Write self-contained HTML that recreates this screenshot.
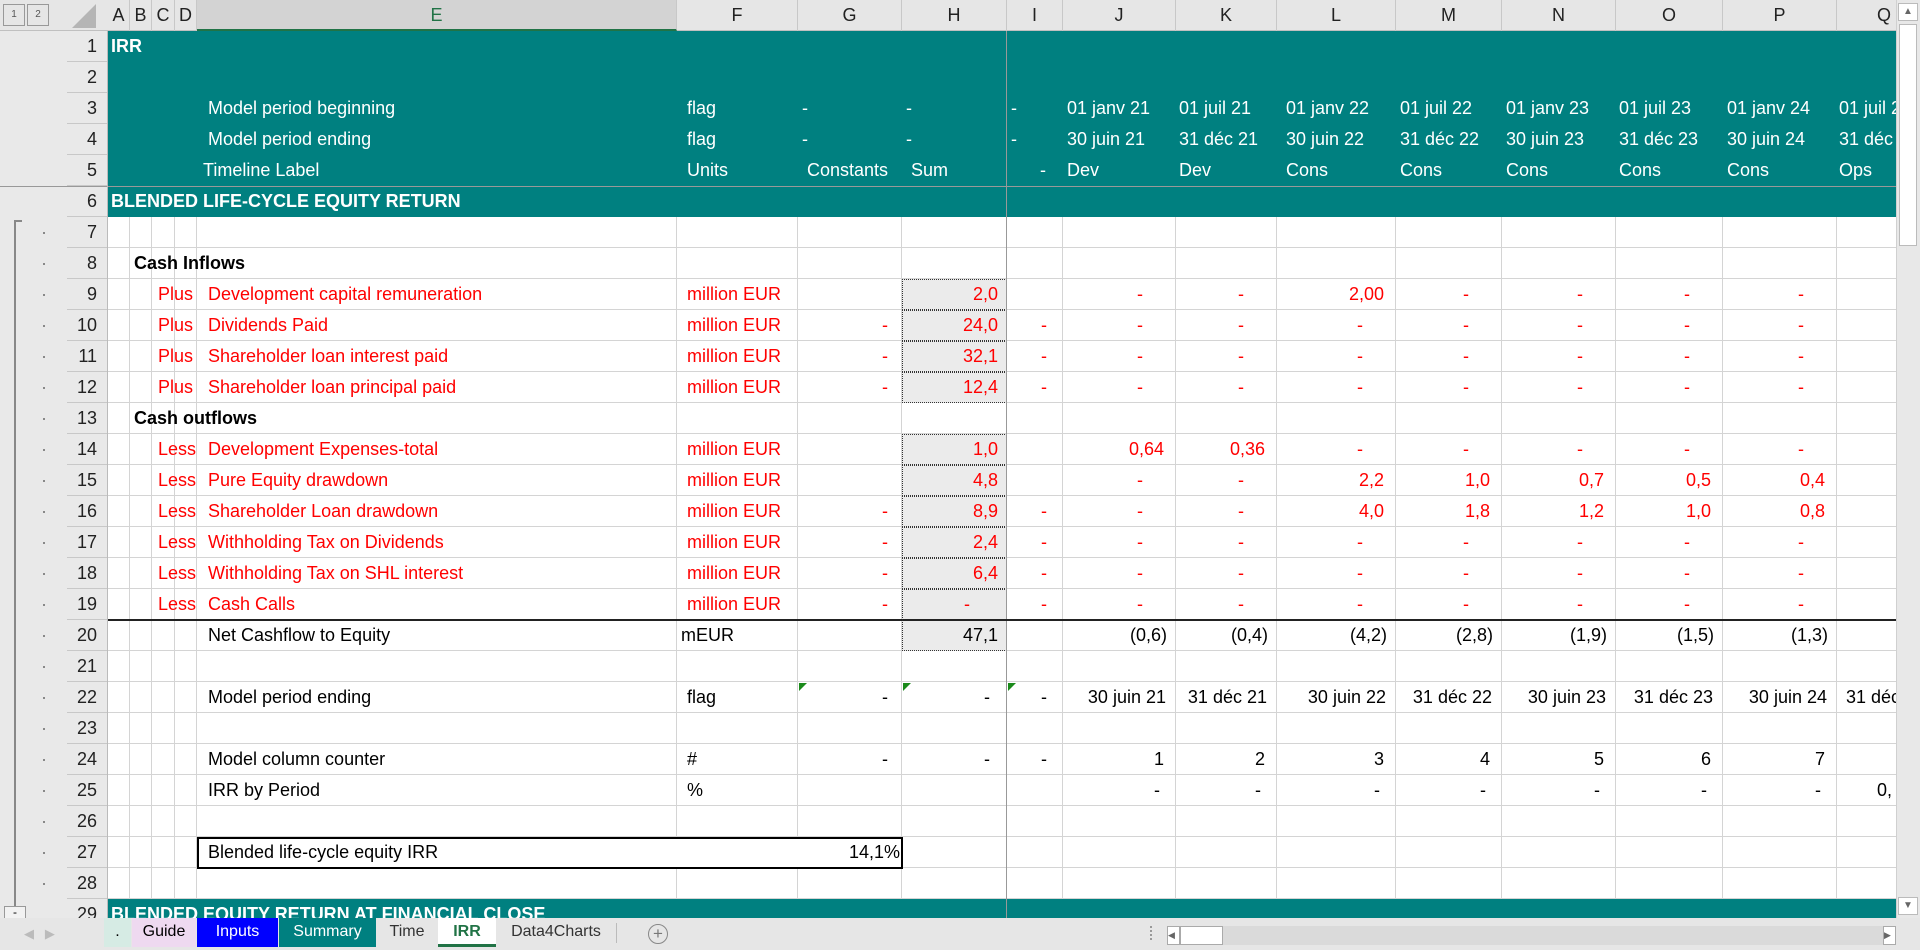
<!DOCTYPE html>
<html><head><meta charset="utf-8">
<style>
*{margin:0;padding:0;box-sizing:border-box}
body{width:1920px;height:950px;overflow:hidden;background:#fff;font-family:"Liberation Sans",Arial,sans-serif;font-size:18px;position:relative}
.a{position:absolute}
.t{position:absolute;height:31px;line-height:31px;white-space:nowrap}
.w{color:#fff}.r{color:#f00}.b{font-weight:bold}
.vl{position:absolute;width:1px;background:#d4d4d4;top:217px;height:682px}
.hd{position:absolute;top:0;height:31px;line-height:31px;text-align:center;font-size:18px;color:#222;border-right:1px solid #c8c8c8}
.rn{position:absolute;left:67px;width:41px;height:31px;line-height:31px;text-align:right;padding-right:11px;color:#222;border-bottom:1px solid #c8c8c8}
.dot{position:absolute;left:43px;width:2px;height:2px;background:#888}
.hc{position:absolute;left:902px;width:105px;height:31px;background:#ebebeb;border:1px dotted #333}
.tab{position:absolute;top:918px;height:29px;line-height:27px;font-size:16px;text-align:center;color:#333}
</style></head><body>
<!-- gutter & row header bg -->
<div class="a" style="left:0;top:0;width:108px;height:918px;background:#e9e9e9"></div>
<div class="a" style="left:0;top:0;width:1896px;height:31px;background:#e6e6e6;border-bottom:1px solid #c0c0c0"></div>
<!-- outline buttons -->
<div class="a" style="left:3px;top:4px;width:22px;height:22px;border:1px solid #999;font-size:10px;text-align:center;line-height:20px;color:#555">1</div>
<div class="a" style="left:27px;top:4px;width:22px;height:22px;border:1px solid #999;font-size:10px;text-align:center;line-height:20px;color:#555">2</div>
<div class="a" style="left:72px;top:4px;width:0;height:0;border-left:24px solid transparent;border-bottom:24px solid #b5b5b5"></div>
<!-- column headers -->
<div class="hd" style="left:108px;width:22px">A</div>
<div class="hd" style="left:130px;width:22px">B</div>
<div class="hd" style="left:152px;width:23px">C</div>
<div class="hd" style="left:175px;width:22px">D</div>
<div class="hd" style="left:197px;width:480px;background:#d3d3d3;color:#217346;border-bottom:2px solid #217346">E</div>
<div class="hd" style="left:677px;width:121px">F</div>
<div class="hd" style="left:798px;width:104px">G</div>
<div class="hd" style="left:902px;width:105px">H</div>
<div class="hd" style="left:1007px;width:56px">I</div>
<div class="hd" style="left:1063px;width:113px">J</div>
<div class="hd" style="left:1176px;width:101px">K</div>
<div class="hd" style="left:1277px;width:119px">L</div>
<div class="hd" style="left:1396px;width:106px">M</div>
<div class="hd" style="left:1502px;width:114px">N</div>
<div class="hd" style="left:1616px;width:107px">O</div>
<div class="hd" style="left:1723px;width:114px">P</div>
<div class="hd" style="left:1837px;width:59px;text-align:left;padding-left:40px;border-right:none">Q</div>
<!-- teal header rows -->
<div class="a" style="left:108px;top:31px;width:1788px;height:186px;background:#008080"></div>
<div class="a" style="left:0;top:186px;width:1896px;height:1px;background:#999"></div>
<div class="a" style="left:108px;top:899px;width:1788px;height:19px;background:#008080"></div>
<!-- grid -->
<div class="a" style="left:108px;top:217px;width:1788px;height:682px;background:repeating-linear-gradient(to bottom,transparent 0 30px,#d4d4d4 30px 31px)"></div>
<div class="vl" style="left:129px"></div><div class="vl" style="left:151px"></div><div class="vl" style="left:174px"></div><div class="vl" style="left:196px"></div>
<div class="vl" style="left:676px"></div><div class="vl" style="left:797px"></div><div class="vl" style="left:901px"></div>
<div class="vl" style="left:1062px"></div><div class="vl" style="left:1175px"></div><div class="vl" style="left:1276px"></div><div class="vl" style="left:1395px"></div><div class="vl" style="left:1501px"></div><div class="vl" style="left:1615px"></div><div class="vl" style="left:1722px"></div><div class="vl" style="left:1836px"></div>
<!-- H gray cells -->
<div class="hc" style="top:279px"></div><div class="hc" style="top:310px"></div><div class="hc" style="top:341px"></div><div class="hc" style="top:372px"></div>
<div class="hc" style="top:434px"></div><div class="hc" style="top:465px"></div><div class="hc" style="top:496px"></div><div class="hc" style="top:527px"></div><div class="hc" style="top:558px"></div><div class="hc" style="top:589px"></div><div class="hc" style="top:620px"></div>
<!-- freeze line -->
<div class="a" style="left:1006px;top:31px;width:1px;height:887px;background:#999"></div>
<!-- row 20 border -->
<div class="a" style="left:108px;top:619px;width:1788px;height:2px;background:#222"></div>
<!-- row 27 box -->
<div class="a" style="left:197px;top:837px;width:706px;height:32px;border:2px solid #000;background:#fff"></div>
<!-- green triangles -->
<div class="a" style="left:799px;top:683px;border-top:8px solid #1a8a1a;border-right:8px solid transparent"></div>
<div class="a" style="left:903px;top:683px;border-top:8px solid #1a8a1a;border-right:8px solid transparent"></div>
<div class="a" style="left:1008px;top:683px;border-top:8px solid #1a8a1a;border-right:8px solid transparent"></div>
<!-- row numbers -->
<div class="rn" style="top:31px">1</div><div class="rn" style="top:62px">2</div><div class="rn" style="top:93px">3</div><div class="rn" style="top:124px">4</div><div class="rn" style="top:155px">5</div><div class="rn" style="top:186px">6</div><div class="rn" style="top:217px">7</div><div class="rn" style="top:248px">8</div><div class="rn" style="top:279px">9</div><div class="rn" style="top:310px">10</div><div class="rn" style="top:341px">11</div><div class="rn" style="top:372px">12</div><div class="rn" style="top:403px">13</div><div class="rn" style="top:434px">14</div><div class="rn" style="top:465px">15</div><div class="rn" style="top:496px">16</div><div class="rn" style="top:527px">17</div><div class="rn" style="top:558px">18</div><div class="rn" style="top:589px">19</div><div class="rn" style="top:620px">20</div><div class="rn" style="top:651px">21</div><div class="rn" style="top:682px">22</div><div class="rn" style="top:713px">23</div><div class="rn" style="top:744px">24</div><div class="rn" style="top:775px">25</div><div class="rn" style="top:806px">26</div><div class="rn" style="top:837px">27</div><div class="rn" style="top:868px">28</div><div class="rn" style="top:899px">29</div>
<div class="a" style="left:107px;top:31px;width:1px;height:887px;background:#bbb"></div>
<!-- outline bracket -->
<div class="a" style="left:14px;top:220px;width:2px;height:690px;background:#888"></div>
<div class="a" style="left:14px;top:220px;width:8px;height:2px;background:#888"></div>
<div class="a" style="left:4px;top:906px;width:22px;height:14px;border:1px solid #999;background:#f2f2f2;font-size:12px;line-height:10px;text-align:center">-</div>
<div class="dot" style="top:232px"></div><div class="dot" style="top:263px"></div><div class="dot" style="top:294px"></div><div class="dot" style="top:325px"></div><div class="dot" style="top:356px"></div><div class="dot" style="top:387px"></div><div class="dot" style="top:418px"></div><div class="dot" style="top:449px"></div><div class="dot" style="top:480px"></div><div class="dot" style="top:511px"></div><div class="dot" style="top:542px"></div><div class="dot" style="top:573px"></div><div class="dot" style="top:604px"></div><div class="dot" style="top:635px"></div><div class="dot" style="top:666px"></div><div class="dot" style="top:697px"></div><div class="dot" style="top:728px"></div><div class="dot" style="top:759px"></div><div class="dot" style="top:790px"></div><div class="dot" style="top:821px"></div><div class="dot" style="top:852px"></div><div class="dot" style="top:883px"></div>

<!-- header text -->
<div class="t w b" style="left:111px;top:31px">IRR</div>
<div class="t w" style="left:208px;top:93px">Model period beginning</div>
<div class="t w" style="left:687px;top:93px">flag</div>
<div class="t w" style="left:802px;top:93px">-</div><div class="t w" style="left:906px;top:93px">-</div><div class="t w" style="left:1011px;top:93px">-</div>
<div class="t w" style="left:1067px;top:93px">01 janv 21</div><div class="t w" style="left:1179px;top:93px">01 juil 21</div><div class="t w" style="left:1286px;top:93px">01 janv 22</div><div class="t w" style="left:1400px;top:93px">01 juil 22</div><div class="t w" style="left:1506px;top:93px">01 janv 23</div><div class="t w" style="left:1619px;top:93px">01 juil 23</div><div class="t w" style="left:1727px;top:93px">01 janv 24</div><div class="t w" style="left:1839px;top:93px;width:57px;overflow:hidden">01 juil 24</div>
<div class="t w" style="left:208px;top:124px">Model period ending</div>
<div class="t w" style="left:687px;top:124px">flag</div>
<div class="t w" style="left:802px;top:124px">-</div><div class="t w" style="left:906px;top:124px">-</div><div class="t w" style="left:1011px;top:124px">-</div>
<div class="t w" style="left:1067px;top:124px">30 juin 21</div><div class="t w" style="left:1179px;top:124px">31 déc 21</div><div class="t w" style="left:1286px;top:124px">30 juin 22</div><div class="t w" style="left:1400px;top:124px">31 déc 22</div><div class="t w" style="left:1506px;top:124px">30 juin 23</div><div class="t w" style="left:1619px;top:124px">31 déc 23</div><div class="t w" style="left:1727px;top:124px">30 juin 24</div><div class="t w" style="left:1839px;top:124px;width:57px;overflow:hidden">31 déc 24</div>
<div class="t w" style="left:203px;top:155px">Timeline Label</div>
<div class="t w" style="left:687px;top:155px">Units</div>
<div class="t w" style="left:807px;top:155px">Constants</div>
<div class="t w" style="left:911px;top:155px">Sum</div>
<div class="t w" style="left:1040px;top:155px">-</div>
<div class="t w" style="left:1067px;top:155px">Dev</div><div class="t w" style="left:1179px;top:155px">Dev</div><div class="t w" style="left:1286px;top:155px">Cons</div><div class="t w" style="left:1400px;top:155px">Cons</div><div class="t w" style="left:1506px;top:155px">Cons</div><div class="t w" style="left:1619px;top:155px">Cons</div><div class="t w" style="left:1727px;top:155px">Cons</div><div class="t w" style="left:1839px;top:155px">Ops</div>
<div class="t w b" style="left:111px;top:186px">BLENDED LIFE-CYCLE EQUITY RETURN</div>

<!-- body -->
<div class="t b" style="left:134px;top:248px">Cash Inflows</div>
<div class="t b" style="left:134px;top:403px">Cash outflows</div>

<div class="t r" style="left:158px;top:279px">Plus</div><div class="t r" style="left:208px;top:279px">Development capital remuneration</div><div class="t r" style="left:687px;top:279px">million EUR</div>
<div class="t r" style="left:158px;top:310px">Plus</div><div class="t r" style="left:208px;top:310px">Dividends Paid</div><div class="t r" style="left:687px;top:310px">million EUR</div>
<div class="t r" style="left:158px;top:341px">Plus</div><div class="t r" style="left:208px;top:341px">Shareholder loan interest paid</div><div class="t r" style="left:687px;top:341px">million EUR</div>
<div class="t r" style="left:158px;top:372px">Plus</div><div class="t r" style="left:208px;top:372px">Shareholder loan principal paid</div><div class="t r" style="left:687px;top:372px">million EUR</div>
<div class="t r" style="left:158px;top:434px">Less</div><div class="t r" style="left:208px;top:434px">Development Expenses-total</div><div class="t r" style="left:687px;top:434px">million EUR</div>
<div class="t r" style="left:158px;top:465px">Less</div><div class="t r" style="left:208px;top:465px">Pure Equity drawdown</div><div class="t r" style="left:687px;top:465px">million EUR</div>
<div class="t r" style="left:158px;top:496px">Less</div><div class="t r" style="left:208px;top:496px">Shareholder Loan drawdown</div><div class="t r" style="left:687px;top:496px">million EUR</div>
<div class="t r" style="left:158px;top:527px">Less</div><div class="t r" style="left:208px;top:527px">Withholding Tax on Dividends</div><div class="t r" style="left:687px;top:527px">million EUR</div>
<div class="t r" style="left:158px;top:558px">Less</div><div class="t r" style="left:208px;top:558px">Withholding Tax on SHL interest</div><div class="t r" style="left:687px;top:558px">million EUR</div>
<div class="t r" style="left:158px;top:589px">Less</div><div class="t r" style="left:208px;top:589px">Cash Calls</div><div class="t r" style="left:687px;top:589px">million EUR</div>

<!-- G dashes -->
<div class="t r" style="left:882px;top:310px">-</div><div class="t r" style="left:882px;top:341px">-</div><div class="t r" style="left:882px;top:372px">-</div><div class="t r" style="left:882px;top:496px">-</div><div class="t r" style="left:882px;top:527px">-</div><div class="t r" style="left:882px;top:558px">-</div><div class="t r" style="left:882px;top:589px">-</div>
<!-- H values -->
<div class="t r" style="right:922px;top:279px">2,0</div><div class="t r" style="right:922px;top:310px">24,0</div><div class="t r" style="right:922px;top:341px">32,1</div><div class="t r" style="right:922px;top:372px">12,4</div>
<div class="t r" style="right:922px;top:434px">1,0</div><div class="t r" style="right:922px;top:465px">4,8</div><div class="t r" style="right:922px;top:496px">8,9</div><div class="t r" style="right:922px;top:527px">2,4</div><div class="t r" style="right:922px;top:558px">6,4</div><div class="t r" style="left:964px;top:589px">-</div>
<div class="t" style="right:922px;top:620px">47,1</div>
<!-- I dashes -->
<div class="t r" style="left:1041px;top:310px">-</div><div class="t r" style="left:1041px;top:341px">-</div><div class="t r" style="left:1041px;top:372px">-</div><div class="t r" style="left:1041px;top:496px">-</div><div class="t r" style="left:1041px;top:527px">-</div><div class="t r" style="left:1041px;top:558px">-</div><div class="t r" style="left:1041px;top:589px">-</div>

<!-- J..P rows: dash left positions J1137 K1238 L1357 M1463 N1577 O1684 P1798 -->
<!-- row 9 -->
<div class="t r" style="left:1137px;top:279px">-</div><div class="t r" style="left:1238px;top:279px">-</div><div class="t r" style="right:536px;top:279px">2,00</div><div class="t r" style="left:1463px;top:279px">-</div><div class="t r" style="left:1577px;top:279px">-</div><div class="t r" style="left:1684px;top:279px">-</div><div class="t r" style="left:1798px;top:279px">-</div>
<!-- rows 10-12,17-19 -->
<div class="t r" style="left:1137px;top:310px">-</div><div class="t r" style="left:1238px;top:310px">-</div><div class="t r" style="left:1357px;top:310px">-</div><div class="t r" style="left:1463px;top:310px">-</div><div class="t r" style="left:1577px;top:310px">-</div><div class="t r" style="left:1684px;top:310px">-</div><div class="t r" style="left:1798px;top:310px">-</div>
<div class="t r" style="left:1137px;top:341px">-</div><div class="t r" style="left:1238px;top:341px">-</div><div class="t r" style="left:1357px;top:341px">-</div><div class="t r" style="left:1463px;top:341px">-</div><div class="t r" style="left:1577px;top:341px">-</div><div class="t r" style="left:1684px;top:341px">-</div><div class="t r" style="left:1798px;top:341px">-</div>
<div class="t r" style="left:1137px;top:372px">-</div><div class="t r" style="left:1238px;top:372px">-</div><div class="t r" style="left:1357px;top:372px">-</div><div class="t r" style="left:1463px;top:372px">-</div><div class="t r" style="left:1577px;top:372px">-</div><div class="t r" style="left:1684px;top:372px">-</div><div class="t r" style="left:1798px;top:372px">-</div>
<!-- row 14 -->
<div class="t r" style="right:756px;top:434px">0,64</div><div class="t r" style="right:655px;top:434px">0,36</div><div class="t r" style="left:1357px;top:434px">-</div><div class="t r" style="left:1463px;top:434px">-</div><div class="t r" style="left:1577px;top:434px">-</div><div class="t r" style="left:1684px;top:434px">-</div><div class="t r" style="left:1798px;top:434px">-</div>
<!-- row 15 -->
<div class="t r" style="left:1137px;top:465px">-</div><div class="t r" style="left:1238px;top:465px">-</div><div class="t r" style="right:536px;top:465px">2,2</div><div class="t r" style="right:430px;top:465px">1,0</div><div class="t r" style="right:316px;top:465px">0,7</div><div class="t r" style="right:209px;top:465px">0,5</div><div class="t r" style="right:95px;top:465px">0,4</div>
<!-- row 16 -->
<div class="t r" style="left:1137px;top:496px">-</div><div class="t r" style="left:1238px;top:496px">-</div><div class="t r" style="right:536px;top:496px">4,0</div><div class="t r" style="right:430px;top:496px">1,8</div><div class="t r" style="right:316px;top:496px">1,2</div><div class="t r" style="right:209px;top:496px">1,0</div><div class="t r" style="right:95px;top:496px">0,8</div>
<div class="t r" style="left:1137px;top:527px">-</div><div class="t r" style="left:1238px;top:527px">-</div><div class="t r" style="left:1357px;top:527px">-</div><div class="t r" style="left:1463px;top:527px">-</div><div class="t r" style="left:1577px;top:527px">-</div><div class="t r" style="left:1684px;top:527px">-</div><div class="t r" style="left:1798px;top:527px">-</div>
<div class="t r" style="left:1137px;top:558px">-</div><div class="t r" style="left:1238px;top:558px">-</div><div class="t r" style="left:1357px;top:558px">-</div><div class="t r" style="left:1463px;top:558px">-</div><div class="t r" style="left:1577px;top:558px">-</div><div class="t r" style="left:1684px;top:558px">-</div><div class="t r" style="left:1798px;top:558px">-</div>
<div class="t r" style="left:1137px;top:589px">-</div><div class="t r" style="left:1238px;top:589px">-</div><div class="t r" style="left:1357px;top:589px">-</div><div class="t r" style="left:1463px;top:589px">-</div><div class="t r" style="left:1577px;top:589px">-</div><div class="t r" style="left:1684px;top:589px">-</div><div class="t r" style="left:1798px;top:589px">-</div>
<!-- row 20 -->
<div class="t" style="left:208px;top:620px">Net Cashflow to Equity</div><div class="t" style="left:681px;top:620px">mEUR</div>
<div class="t" style="right:753px;top:620px">(0,6)</div><div class="t" style="right:652px;top:620px">(0,4)</div><div class="t" style="right:533px;top:620px">(4,2)</div><div class="t" style="right:427px;top:620px">(2,8)</div><div class="t" style="right:313px;top:620px">(1,9)</div><div class="t" style="right:206px;top:620px">(1,5)</div><div class="t" style="right:92px;top:620px">(1,3)</div>
<!-- row 22 -->
<div class="t" style="left:208px;top:682px">Model period ending</div><div class="t" style="left:687px;top:682px">flag</div>
<div class="t" style="left:882px;top:682px">-</div><div class="t" style="left:984px;top:682px">-</div><div class="t" style="left:1041px;top:682px">-</div>
<div class="t" style="right:754px;top:682px">30 juin 21</div><div class="t" style="right:653px;top:682px">31 déc 21</div><div class="t" style="right:534px;top:682px">30 juin 22</div><div class="t" style="right:428px;top:682px">31 déc 22</div><div class="t" style="right:314px;top:682px">30 juin 23</div><div class="t" style="right:207px;top:682px">31 déc 23</div><div class="t" style="right:93px;top:682px">30 juin 24</div><div class="t" style="left:1846px;top:682px;width:50px;overflow:hidden">31 déc 24</div>
<!-- row 24 -->
<div class="t" style="left:208px;top:744px">Model column counter</div><div class="t" style="left:687px;top:744px">#</div>
<div class="t" style="left:882px;top:744px">-</div><div class="t" style="left:984px;top:744px">-</div><div class="t" style="left:1041px;top:744px">-</div>
<div class="t" style="right:756px;top:744px">1</div><div class="t" style="right:655px;top:744px">2</div><div class="t" style="right:536px;top:744px">3</div><div class="t" style="right:430px;top:744px">4</div><div class="t" style="right:316px;top:744px">5</div><div class="t" style="right:209px;top:744px">6</div><div class="t" style="right:95px;top:744px">7</div>
<!-- row 25 -->
<div class="t" style="left:208px;top:775px">IRR by Period</div><div class="t" style="left:687px;top:775px">%</div>
<div class="t" style="left:1154px;top:775px">-</div><div class="t" style="left:1255px;top:775px">-</div><div class="t" style="left:1374px;top:775px">-</div><div class="t" style="left:1480px;top:775px">-</div><div class="t" style="left:1594px;top:775px">-</div><div class="t" style="left:1701px;top:775px">-</div><div class="t" style="left:1815px;top:775px">-</div><div class="t" style="left:1877px;top:775px">0,</div>
<!-- row 27 -->
<div class="t" style="left:208px;top:837px">Blended life-cycle equity IRR</div>
<div class="t" style="right:1020px;top:837px">14,1%</div>
<!-- row 29 -->
<div class="a" style="left:108px;top:899px;width:1788px;height:19px;overflow:hidden"><div class="t w b" style="left:3px;top:0">BLENDED EQUITY RETURN AT FINANCIAL CLOSE</div></div>

<!-- vertical scrollbar -->
<div class="a" style="left:1896px;top:0;width:24px;height:918px;background:#e8e8e8;border-left:1px solid #d0d0d0"></div>
<div class="a" style="left:1898px;top:3px;width:20px;height:18px;background:#fff;border:1px solid #bbb;font-size:10px;text-align:center;line-height:16px;color:#666">▲</div>
<div class="a" style="left:1899px;top:24px;width:18px;height:222px;background:#fff;border:1px solid #bbb"></div>
<div class="a" style="left:1898px;top:897px;width:20px;height:18px;background:#fff;border:1px solid #bbb;font-size:10px;text-align:center;line-height:16px;color:#666">▼</div>
<!-- tab bar -->
<div class="a" style="left:0;top:918px;width:1920px;height:32px;background:#e6e6e6"></div>
<div class="t" style="left:24px;top:918px;font-size:13px;color:#bbb">◀ &nbsp; ▶</div>
<div class="tab" style="left:104px;width:27px;background:#d6ebe4;color:#000">.</div>
<div class="tab" style="left:132px;width:64px;background:#eed9f0;color:#000">Guide</div>
<div class="tab" style="left:197px;width:81px;background:#0000ff;color:#fff">Inputs</div>
<div class="tab" style="left:279px;width:97px;background:#008080;color:#fff">Summary</div>
<div class="tab" style="left:377px;width:60px">Time</div>
<div class="tab" style="left:438px;width:58px;background:#fff;color:#217346;font-weight:bold;border-bottom:3px solid #217346">IRR</div>
<div class="tab" style="left:497px;width:118px">Data4Charts</div>
<div class="a" style="left:616px;top:923px;width:1px;height:20px;background:#bbb"></div>
<div class="a" style="left:648px;top:924px;width:20px;height:20px;border:1px solid #888;border-radius:50%;text-align:center;line-height:17px;font-size:17px;color:#777">+</div>
<!-- horizontal scrollbar -->
<div class="a" style="left:1150px;top:926px;width:2px;height:14px;border-left:2px dotted #999"></div>
<div class="a" style="left:1167px;top:926px;width:729px;height:19px;background:#dadada"></div>
<div class="a" style="left:1167px;top:926px;width:13px;height:19px;background:#fff;border:1px solid #aaa;font-size:9px;line-height:17px;color:#666">◀</div>
<div class="a" style="left:1180px;top:926px;width:43px;height:19px;background:#fff;border:1px solid #aaa"></div>
<div class="a" style="left:1883px;top:926px;width:13px;height:19px;background:#fff;border:1px solid #aaa;font-size:9px;line-height:17px;color:#666">▶</div>
</body></html>
